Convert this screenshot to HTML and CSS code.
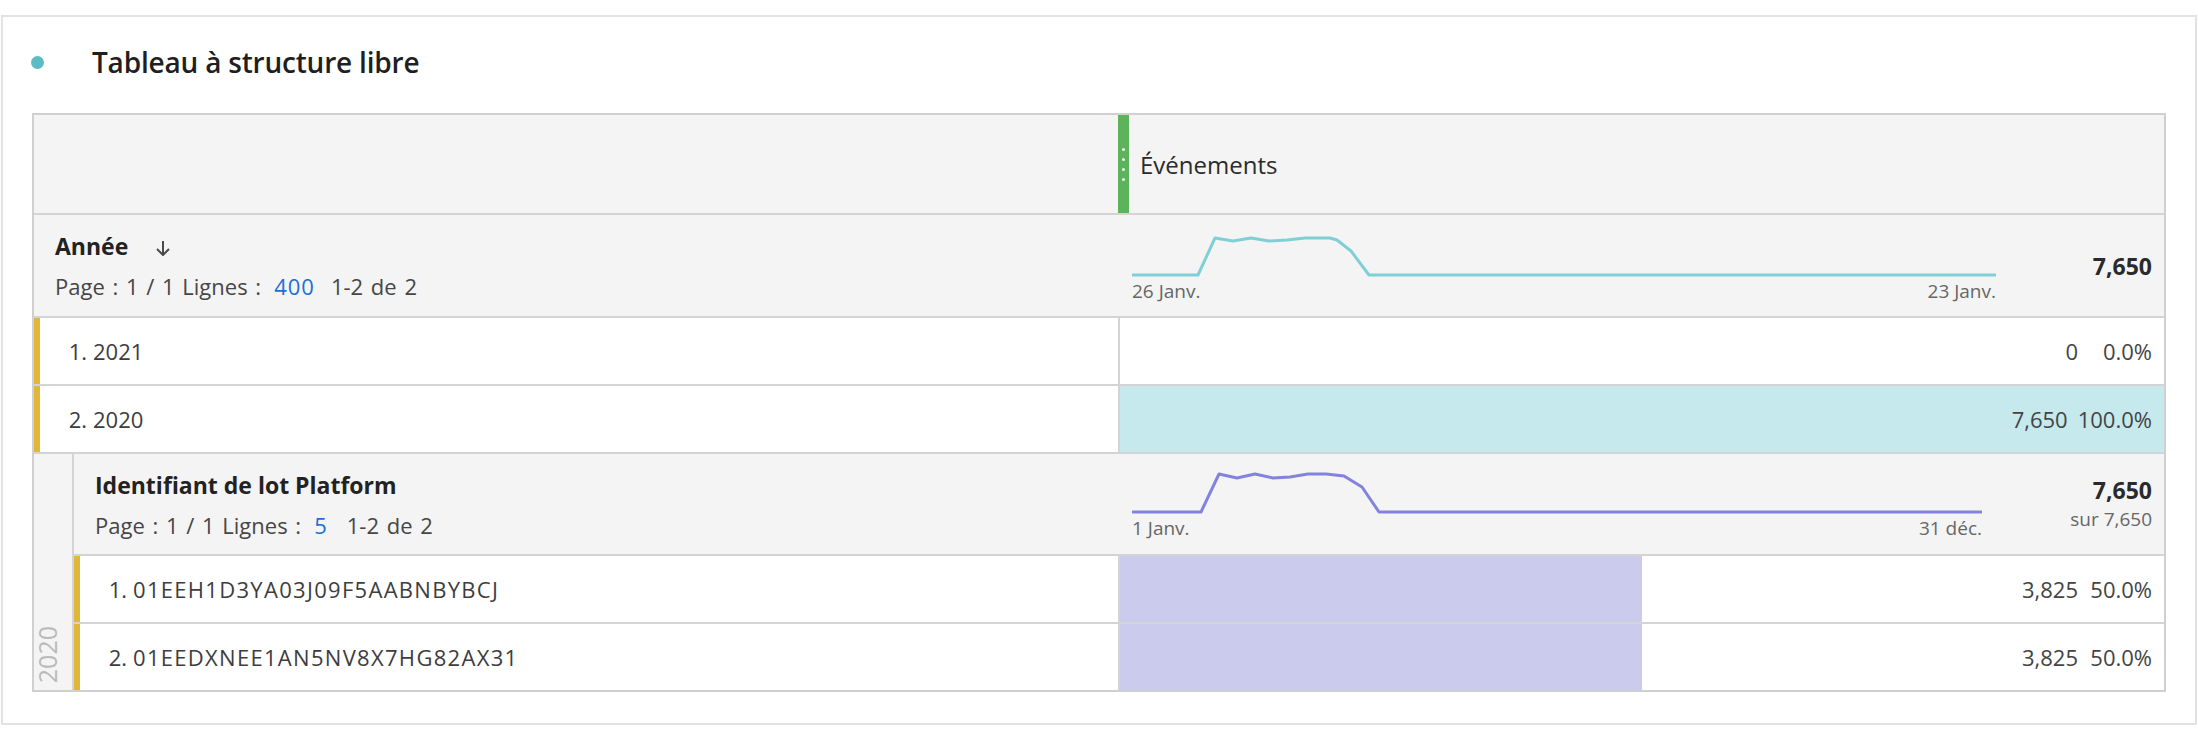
FILE: index.html
```html
<!DOCTYPE html>
<html lang="fr">
<head>
<meta charset="utf-8">
<title>Tableau à structure libre</title>
<link rel="stylesheet" href="styles.css">
</head>
<body>
<div class="panel">
  <div class="title-row">
    <span class="dot"></span>
    <h1 class="title">Tableau à structure libre</h1>
  </div>
  <div class="table">
    <div class="row head-row">
      <div class="cell"></div>
      <div class="cell metric-head">
        <span class="grip"><i></i><i></i><i></i><i></i></span>
        <span class="metric-name">Événements</span>
      </div>
    </div>

    <div class="row dim-row">
      <div class="cell dim-cell">
        <div class="dim-name">Année<svg class="sort" width="16" height="16" viewBox="0 0 16 16"><path d="M8 1v14M2 9l6 6 6-6" /></svg></div>
        <div class="pager">Page : 1 / 1 Lignes :<span class="link">400</span><span class="range">1-2 de 2</span></div>
      </div>
      <div class="cell summary">
        <div class="spark spark-a">
          <svg width="864" height="50" viewBox="0 0 864 50"><polyline class="line-cyan" points="0,48 66,48 83,11 101,14 119,11 137,14 155,13 173,11 198,11 205,13 219,24 237,48 864,48"/></svg>
          <div class="axis"><span>26 Janv.</span><span>23 Janv.</span></div>
        </div>
        <div class="total"><div class="total-num">7,650</div></div>
      </div>
    </div>

    <div class="row data-row">
      <div class="cell label"><span class="num">1.</span>2021</div>
      <div class="cell value"><span class="v">0</span><span class="pct">0.0%</span></div>
    </div>

    <div class="row data-row">
      <div class="cell label"><span class="num">2.</span>2020</div>
      <div class="cell value"><div class="bar bar-cyan" style="width:100%"></div><span class="v">7,650</span><span class="pct">100.0%</span></div>
    </div>

    <div class="nested">
      <div class="nest-label"><span>2020</span></div>
      <div class="nest-body">
        <div class="row nrow dim-row">
          <div class="cell dim-cell">
            <div class="dim-name">Identifiant de lot Platform</div>
            <div class="pager">Page : 1 / 1 Lignes :<span class="link">5</span><span class="range range-b">1-2 de 2</span></div>
          </div>
          <div class="cell summary">
            <div class="spark spark-b">
              <svg width="850" height="50" viewBox="0 0 850 50"><polyline class="line-purple" points="0,48 69,48 87,10 105,14 123,10 141,14 158,13 176,10 194,10 212,12 230,23 247,48 850,48"/></svg>
              <div class="axis"><span>1 Janv.</span><span>31 déc.</span></div>
            </div>
            <div class="total">
              <div class="total-num">7,650</div>
              <div class="total-of">sur 7,650</div>
            </div>
          </div>
        </div>
        <div class="row nrow data-row">
          <div class="cell label"><span class="num">1.</span><span class="id">01EEH1D3YA03J09F5AABNBYBCJ</span></div>
          <div class="cell value"><div class="bar bar-purple" style="width:50%"></div><span class="v">3,825</span><span class="pct">50.0%</span></div>
        </div>
        <div class="row nrow data-row last">
          <div class="cell label"><span class="num">2.</span><span class="id">01EEDXNEE1AN5NV8X7HG82AX31</span></div>
          <div class="cell value"><div class="bar bar-purple" style="width:50%"></div><span class="v">3,825</span><span class="pct">50.0%</span></div>
        </div>
      </div>
    </div>
  </div>
</div>
</body>
</html>
```

FILE: styles.css
```css
* { box-sizing: border-box; }

body {
  margin: 0;
  background: #ffffff;
  font-family: "Open Sans", "Noto Sans", sans-serif;
  color: #444444;
}

.panel {
  margin: 15px 1px 0 1px;
  border: 2px solid #e2e2e2;
  padding: 0 29px 31px 29px;
}

.title-row {
  height: 96px;
  display: flex;
  align-items: center;
  padding-bottom: 6px;
}

.dot {
  width: 13px;
  height: 13px;
  border-radius: 50%;
  background: #5bbcc4;
  margin-left: -1px;
  flex: none;
}

.title {
  margin: 0 0 0 48px;
  font-size: 28px;
  font-weight: 600;
  color: #1f1f1f;
  letter-spacing: -0.2px;
}

.table {
  border: 2px solid #d0d0d0;
  border-bottom: none;
}

.row {
  display: grid;
  grid-template-columns: 1084px 1fr;
  border-bottom: 2px solid #d4d4d4;
}

.head-row {
  height: 100px;
  background: #f4f4f4;
}

.metric-head {
  display: flex;
  align-items: center;
}

.grip {
  width: 11px;
  align-self: stretch;
  background: #5cb35c;
  display: flex;
  flex-direction: column;
  justify-content: center;
  align-items: center;
  gap: 7px;
}

.grip i {
  display: block;
  width: 3px;
  height: 3px;
  border-radius: 50%;
  background: #e8f5e8;
}

.metric-name {
  margin-left: 11px;
  font-size: 24px;
  color: #2b2b2b;
}

.dim-row {
  height: 103px;
  background: #f4f4f4;
}

.dim-cell {
  padding: 17px 0 0 21px;
}

.dim-name {
  font-size: 23px;
  line-height: 28px;
  font-weight: 700;
  color: #222222;
}

.sort {
  margin-left: 27px;
  fill: none;
  stroke: #4a4a4a;
  stroke-width: 2;
  vertical-align: -1px;
}

.pager {
  margin-top: 12px;
  font-size: 22px;
  line-height: 28px;
  color: #464646;
  word-spacing: 2px;
}

.link {
  color: #1c6fd8;
  margin-left: 13px;
  letter-spacing: 1px;
}

.range {
  margin-left: 16px;
}

.range-b {
  margin-left: 19px;
}

.summary {
  display: flex;
  align-items: flex-start;
  padding: 0 12px 0 14px;
}

.spark {
  margin-top: 12px;
  flex: none;
}

.spark-a { width: 864px; }
.spark-b { width: 850px; margin-top: 10px; }

.spark svg {
  display: block;
  overflow: visible;
}

.spark polyline {
  fill: none;
  stroke-width: 3;
  stroke-linejoin: round;
}

.line-cyan { stroke: #7fd0d6; }
.line-purple { stroke: #8383dd; }

.axis {
  margin-top: 3px;
  display: flex;
  justify-content: space-between;
  font-size: 19px;
  line-height: 22px;
  color: #666666;
}

.total {
  flex: 1;
  align-self: center;
  text-align: right;
}

.total-num {
  font-size: 23px;
  line-height: 28px;
  font-weight: 700;
  color: #2a2a2a;
}

.total-of {
  font-size: 19px;
  line-height: 26px;
  margin-top: 2px;
  color: #666666;
}

.data-row {
  height: 68px;
  background: #ffffff;
}

.label {
  display: flex;
  align-items: center;
  border-left: 6px solid #dfb73a;
  padding-left: 27px;
  font-size: 22px;
  color: #3d3d3d;
}

.num {
  display: inline-block;
  width: 20px;
  text-align: right;
  margin-right: 6px;
}

.id {
  letter-spacing: 1.3px;
}

.value {
  position: relative;
  border-left: 2px solid #d4d4d4;
  display: flex;
  justify-content: flex-end;
  align-items: center;
  padding-right: 12px;
  font-size: 22px;
  color: #444444;
}

.bar {
  position: absolute;
  left: 0;
  top: 0;
  bottom: 0;
}

.bar-cyan { background: #c5e9ec; }
.bar-purple { background: #cbcbee; }

.v, .pct {
  position: relative;
}

.pct {
  margin-left: 10px;
  min-width: 64px;
  text-align: right;
}

.nested {
  display: flex;
  border-bottom: 2px solid #cfcfcf;
}

.nest-label {
  width: 40px;
  flex: none;
  background: #f4f4f4;
  border-right: 2px solid #d4d4d4;
  display: flex;
  align-items: flex-end;
  justify-content: flex-start;
  padding: 0 0 7px 1px;
}

.nest-label span {
  writing-mode: vertical-rl;
  transform: rotate(180deg);
  font-size: 25px;
  line-height: 1;
  color: #bbbbbb;
}

.nest-body {
  flex: 1;
  min-width: 0;
}

.nrow {
  grid-template-columns: 1044px 1fr;
}

.nrow.dim-row {
  height: 102px;
}

.nrow.last {
  border-bottom: none;
  height: 66px;
}
```
